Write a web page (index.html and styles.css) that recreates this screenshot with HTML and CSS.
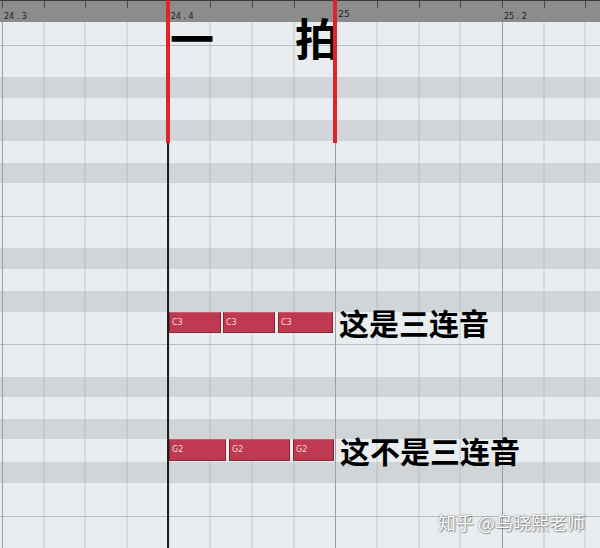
FILE: index.html
```html
<!DOCTYPE html>
<html lang="zh">

<head>
    <meta charset="UTF-8">
    <meta name="viewport" content="width=device-width, initial-scale=1.0">
    <title>Key Editor</title>
    <link rel="stylesheet" href="styles.css">
</head>

<body>
    <div id="editor">
        <!-- time ruler, one cell per 16th -->
        <div class="ruler">
            <div class="tick"><span class="pos">24 . 3</span></div>
            <div class="tick"></div>
            <div class="tick"></div>
            <div class="tick"></div>
            <div class="tick"><span class="pos">24 . 4</span></div>
            <div class="tick"></div>
            <div class="tick"></div>
            <div class="tick"></div>
            <div class="tick"><span class="pos bar">25</span></div>
            <div class="tick"></div>
            <div class="tick"></div>
            <div class="tick"></div>
            <div class="tick"><span class="pos">25 . 2</span></div>
            <div class="tick"></div>
            <div class="tick"></div>
        </div>

        <!-- pitch lanes -->
        <div class="lanes">
            <div class="lane white h23"></div>
            <div class="lane white h32 split"></div>
            <div class="lane black h21"></div>
            <div class="lane white h22"></div>
            <div class="lane black h21"></div>
            <div class="lane white h22"></div>
            <div class="lane black h20"></div>
            <div class="lane white h33"></div>
            <div class="lane white h32 split"></div>
            <div class="lane black h21"></div>
            <div class="lane white h22"></div>
            <div class="lane black h21"></div>
            <div class="lane white h32 notes">
                <div class="note" style="width: 52px">C3</div>
                <div class="note" style="width: 52px; margin-left: 2px">C3</div>
                <div class="note" style="width: 55px; margin-left: 3px">C3</div>
                <span class="caption">这是三连音</span>
            </div>
            <div class="lane white h33 split"></div>
            <div class="lane black h20"></div>
            <div class="lane white h22"></div>
            <div class="lane black h20"></div>
            <div class="lane white h23 notes">
                <div class="note tall" style="width: 57px">G2</div>
                <div class="note tall" style="width: 61px; margin-left: 3px">G2</div>
                <div class="note tall" style="width: 41px; margin-left: 3px">G2</div>
                <span class="caption tall">这不是三连音</span>
            </div>
            <div class="lane black h21"></div>
            <div class="lane white h33"></div>
            <div class="lane white h32 split"></div>

            <!-- vertical grid over the lanes -->
            <div class="grid">
                <div class="col beat"></div>
                <div class="col"></div>
                <div class="col"></div>
                <div class="col"></div>
                <div class="col"></div>
                <div class="col"></div>
                <div class="col"></div>
                <div class="col"></div>
                <div class="col beat"></div>
                <div class="col"></div>
                <div class="col"></div>
                <div class="col"></div>
                <div class="col beat"></div>
                <div class="col"></div>
                <div class="col"></div>
            </div>
        </div>

        <div class="playhead"></div>
        <div class="marker left"></div>
        <div class="marker right"></div>

        <div class="beat-label">
            <span>一</span>
            <span>拍</span>
        </div>

        <div class="watermark">知乎 @乌晓熙老师</div>
    </div>
</body>

</html>
```

FILE: styles.css
```css
body {
    margin: 0;
    padding: 0;
    width: 600px;
    height: 548px;
    overflow: hidden;
    font-family: "Noto Sans CJK SC", "Liberation Sans", sans-serif;
}

#editor {
    position: relative;
    width: 600px;
    height: 548px;
    overflow: hidden;
    background: #e9edf0;
}

/* ruler */
.ruler {
    height: 22px;
    box-sizing: border-box;
    border-top: 1px solid #3a3a3a;
    background: #8c8c8c;
    display: flex;
    padding-left: 2px;
}

.tick {
    position: relative;
    flex: 0 0 41.67px;
}

.tick::before {
    content: "";
    position: absolute;
    left: 0;
    top: 0;
    width: 1px;
    height: 7px;
    background: #4a4a4a;
}

.pos {
    display: block;
    padding: 11px 0 0 2px;
    font-family: "DejaVu Sans", sans-serif;
    font-size: 8px;
    line-height: 9px;
    color: #1e1e1e;
    white-space: pre;
}

.pos.bar {
    font-size: 9px;
    padding-top: 9px;
    padding-left: 3px;
}

/* lanes */
.lanes {
    position: relative;
    display: flex;
    flex-direction: column;
}

.lane {
    box-sizing: border-box;
    flex: none;
}

.lane.white {
    background: #e9edf0;
}

.lane.black {
    background: #d1d5d8;
}

.lane.split {
    border-top: 1px solid #b9bec2;
}

.h20 { height: 20px; }
.h21 { height: 21px; }
.h22 { height: 22px; }
.h23 { height: 23px; }
.h32 { height: 32px; }
.h33 { height: 33px; }

.grid {
    position: absolute;
    inset: 0;
    display: flex;
    padding-left: 1px;
    pointer-events: none;
    z-index: 1;
}

.col {
    flex: 0 0 41.67px;
    box-sizing: border-box;
    border-left: 2px solid rgba(160, 172, 182, 0.28);
}

.col.beat {
    border-left: 1px solid #9a9fa4;
    margin-left: 1px;
    flex-basis: 40.67px;
}

/* notes */
.lane.notes {
    display: flex;
    align-items: flex-start;
    padding-left: 169px;
}

.note {
    position: relative;
    z-index: 2;
    box-sizing: border-box;
    height: 21px;
    padding: 5px 0 0 2px;
    background: #bf3951;
    border: 1px solid #8a2538;
    border-top-color: #c95c6e;
    color: #f6d9de;
    font-family: "DejaVu Sans", sans-serif;
    font-size: 8px;
    line-height: 10px;
}

.note.tall {
    height: 22px;
}

.caption {
    position: relative;
    z-index: 2;
    margin-left: 6px;
    font-size: 30px;
    font-weight: 700;
    line-height: 21px;
    color: #000;
    white-space: nowrap;
}

.caption.tall {
    line-height: 22px;
}

/* overlays */
.playhead {
    position: absolute;
    left: 167px;
    top: 140px;
    width: 1.5px;
    height: 408px;
    background: #1f1f1f;
    z-index: 3;
}

.marker {
    position: absolute;
    top: 0;
    width: 4px;
    height: 143px;
    background: #e1222b;
    z-index: 5;
}

.marker.left { left: 166px; }
.marker.right { left: 333px; }

.beat-label {
    position: absolute;
    left: 170px;
    top: 21px;
    width: 169px;
    display: flex;
    justify-content: space-between;
    font-size: 44px;
    font-weight: 700;
    line-height: 32px;
    color: #000;
    z-index: 4;
}

.watermark {
    position: absolute;
    right: 15px;
    top: 510px;
    font-size: 18px;
    line-height: 24px;
    color: #fff;
    text-shadow: 0 0 2px rgba(0, 0, 0, 0.55), 1px 1px 1px rgba(0, 0, 0, 0.3);
    z-index: 6;
}
```
